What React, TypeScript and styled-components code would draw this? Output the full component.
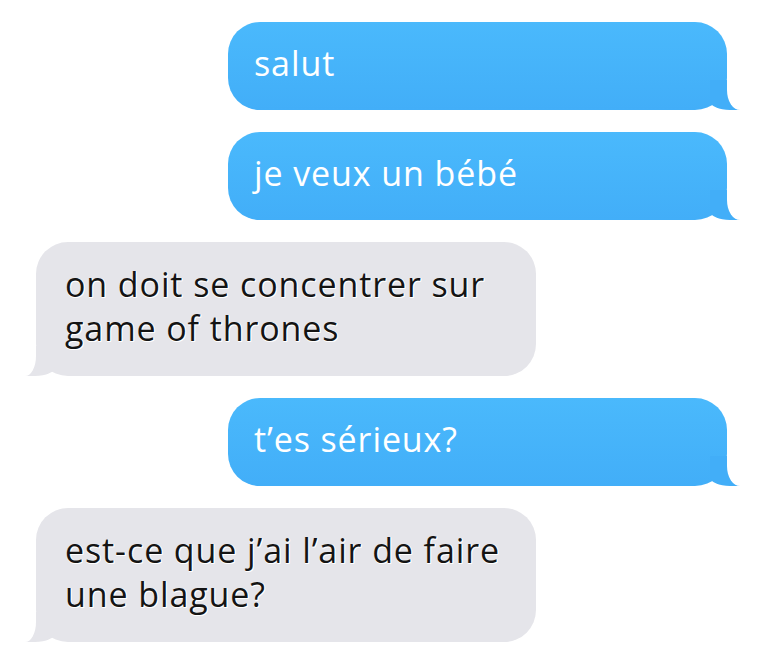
import styled, { createGlobalStyle, css } from 'styled-components'

const GlobalStyle = createGlobalStyle`
  html, body {
    margin: 0;
    background: #ffffff;
  }
  body {
    font-family: "Open Sans", "Noto Sans", sans-serif;
  }
`

const Thread = styled.div`
  display: flex;
  flex-direction: column;
  gap: 22px;
  padding: 22px 0 0;
  width: 764px;
  height: 668px;
  box-sizing: border-box;
  overflow: hidden;
`

const Bubble = styled.div<{ $me?: boolean }>`
  position: relative;
  box-sizing: border-box;
  align-self: flex-start;
  border-radius: 32px;
  font-size: 34px;
  line-height: 44px;
  letter-spacing: 0.9px;

  &::before,
  &::after {
    content: '';
    position: absolute;
    bottom: 0;
    height: 30px;
  }

  ${({ $me }) =>
    $me
      ? css`
          margin-left: 228px;
          width: 499px;
          padding: 19px 26px 25px;
          color: #ffffff;
          background: linear-gradient(#4ab9fc, #42aef8);

          /* tail */
          &::before {
            right: -13px;
            width: 30px;
            background: #42aef8;
            border-bottom-left-radius: 20px 9px;
          }
          &::after {
            right: -30px;
            width: 30px;
            background: #ffffff;
            border-bottom-left-radius: 13px 20px;
          }
        `
      : css`
          margin-left: 36px;
          width: 500px;
          padding: 20px 29px 26px;
          color: #141414;
          background: #e5e5ea;
          text-shadow:
            1px 1px 0 #fff,
            1px 0 0 #fff,
            0 1px 0 #fff;

          &::before {
            left: -11px;
            width: 30px;
            background: #e5e5ea;
            border-bottom-right-radius: 20px 9px;
          }
          &::after {
            left: -30px;
            width: 30px;
            background: #ffffff;
            border-bottom-right-radius: 11px 20px;
          }
        `}
`

const Text = styled.span`
  position: relative;
  z-index: 1;
`

const messages: { me: boolean; text: string[] }[] = [
  { me: true, text: ['salut'] },
  { me: true, text: ['je veux un bébé'] },
  { me: false, text: ['on doit se concentrer sur', 'game of thrones'] },
  { me: true, text: ['t’es sérieux?'] },
  { me: false, text: ['est-ce que j’ai l’air de faire', 'une blague?'] },
]

export default function App() {
  return (
    <>
      <GlobalStyle />
      <Thread>
        {messages.map((m, i) => (
          <Bubble key={i} $me={m.me}>
            {m.text.map((line, j) => (
              <Text key={j}>
                {line}
                {j < m.text.length - 1 && <br />}
              </Text>
            ))}
          </Bubble>
        ))}
      </Thread>
    </>
  )
}
